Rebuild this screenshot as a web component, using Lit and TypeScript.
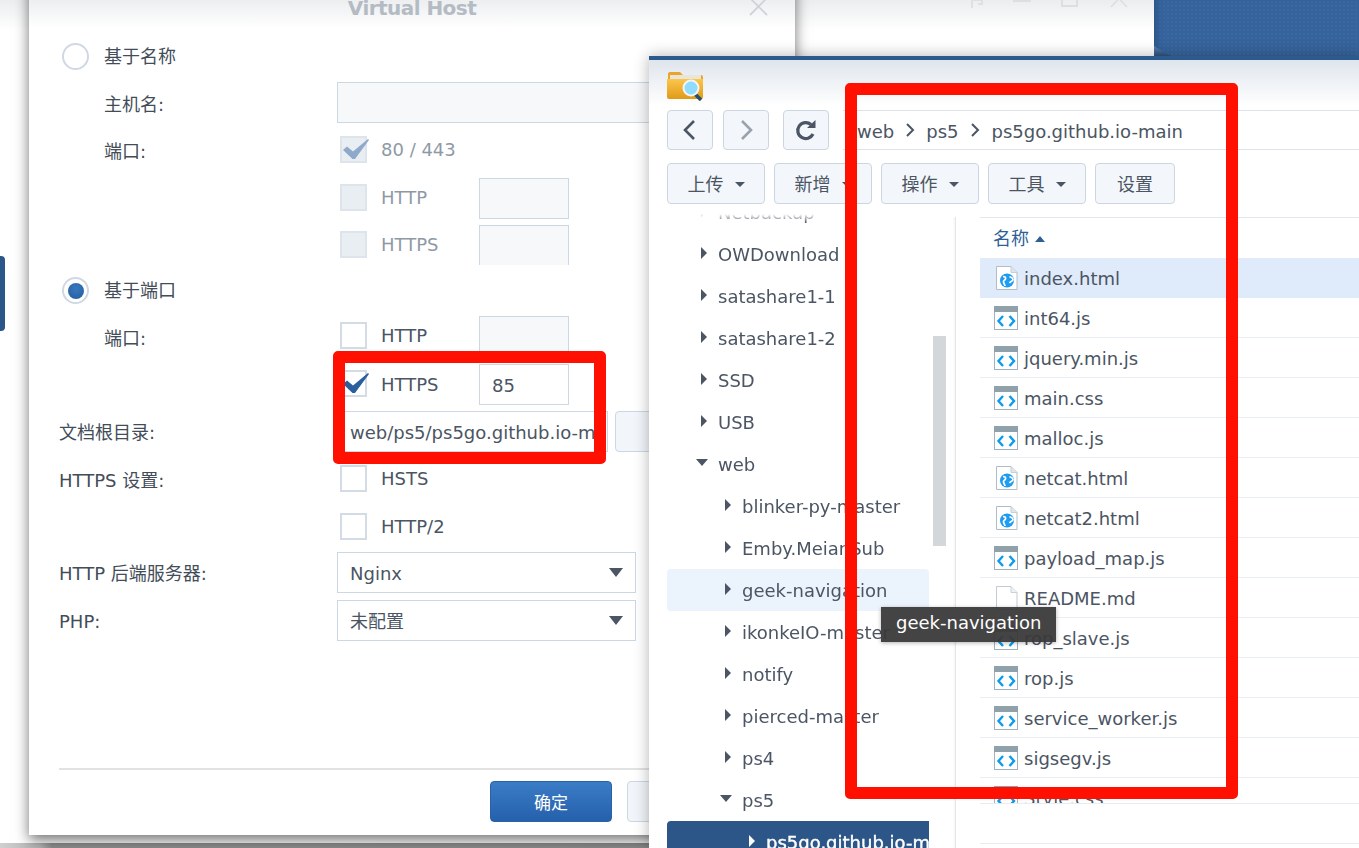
import { LitElement, html, css, svg } from "lit";
import { customElement } from "lit/decorators.js";

const tree: [string, number, string][] = [
  ["Netbackup", 1, "r"],
  ["OWDownload", 1, "r"],
  ["satashare1-1", 1, "r"],
  ["satashare1-2", 1, "r"],
  ["SSD", 1, "r"],
  ["USB", 1, "r"],
  ["web", 1, "d"],
  ["blinker-py-master", 2, "r"],
  ["Emby.MeianSub", 2, "r"],
  ["geek-navigation", 2, "r hover"],
  ["ikonkeIO-master", 2, "r"],
  ["notify", 2, "r"],
  ["pierced-master", 2, "r"],
  ["ps4", 2, "r"],
  ["ps5", 2, "d"],
  ["ps5go.github.io-main", 3, "r sel"],
];

const files: [string, string][] = [
  ["index.html", "html"],
  ["int64.js", "code"],
  ["jquery.min.js", "code"],
  ["main.css", "code"],
  ["malloc.js", "code"],
  ["netcat.html", "html"],
  ["netcat2.html", "html"],
  ["payload_map.js", "code"],
  ["README.md", "doc"],
  ["rop_slave.js", "code"],
  ["rop.js", "code"],
  ["service_worker.js", "code"],
  ["sigsegv.js", "code"],
  ["Style.css", "code"],
];

const codeIcon = svg`<svg class="ficon" viewBox="0 0 24 24"><rect x=".5" y=".5" width="23" height="23" fill="#fff" stroke="#9fb2bd"/><rect width="24" height="6" fill="#8fa2ac"/><path d="M9 10 4.500 15 9 20M15.500 10 20 15l-4.500 5" fill="none" stroke="#0a9bec" stroke-width="2.400"/></svg>`;
const htmlIcon = svg`<svg class="ficon" viewBox="0 0 24 24"><path d="M2.500.5H17L23 6.500V23.500H2.500Z" fill="#fff" stroke="#aebdc8"/><path d="M17 .5V6.500H23" fill="#dfe6ea" stroke="#c4cfd6"/><circle cx="13" cy="14.500" r="7" fill="#1d9cf0"/><path d="M9 10.500c2 0 3 1 2.500 2.500S9 14 9.500 16s1.500 3 1.500 4M15.500 10.500c1 1 3.500 1 3.500 3s-2.500 1.500-3.500 3.500" fill="none" stroke="#fff" stroke-width="1.700"/></svg>`;
const docIcon = svg`<svg class="ficon" viewBox="0 0 24 24"><path d="M2.500.5H17L23 6.500V23.500H2.500Z" fill="#fff" stroke="#c0cbd3"/><path d="M17 .5V6.500H23" fill="#eef1f3" stroke="#c8d2d9"/></svg>`;
const icons: Record<string, unknown> = { code: codeIcon, html: htmlIcon, doc: docIcon };

const check = svg`<svg class="tick" viewBox="0 0 26 20"><path d="M0 11 4 7.500 10 12.500 25 0 26 1 12 20H9.500Z" fill="currentColor"/></svg>`;

@customElement("app-root")
export class AppRoot extends LitElement {
  static styles = css`
    :host { display: block; width: 1359px; height: 848px; }
    * { box-sizing: border-box; }
    .stage {
      position: relative; width: 1359px; height: 848px; overflow: hidden; background: #fff;
      font: 18px/24px "DejaVu Sans", "Noto Sans CJK SC", sans-serif; color: #4b5563;
    }
    .topfade { position: absolute; left: 0; top: 0; width: 1154px; height: 30px; background: linear-gradient(#ebedef, #fff); }
    .desktop {
      position: absolute; left: 1154px; top: 0; right: 0; height: 60px; background-color: #36639b;
      background-image: radial-gradient(circle, #3b68a0 1px, transparent 1.200px);
      background-size: 4px 4px; box-shadow: inset 8px 0 6px -6px #2a5283;
    }
    .fold { position: absolute; left: 0; top: 46px; width: 17px; height: 10px; background: linear-gradient(#5b80ad, #2c5483); clip-path: polygon(0 0, 100% 100%, 0 100%); }
    .tab { position: absolute; left: 0; top: 256px; width: 5px; height: 75px; background: #2b5687; border-radius: 0 4px 4px 0; }
    .strip { position: absolute; left: 0; right: 0; bottom: 0; height: 5px; background: linear-gradient(90deg, #d0d0d0 0, #b5b5b5 40px, #8f8f8f 52px, #8a8a8a 100%); }
    .ctrl { position: absolute; top: -10px; left: 970px; display: flex; }
    .ctrl svg { display: block; width: 18px; height: 18px; flex: none; }
    .ctrl svg:nth-child(2) { margin-left: 25px; }
    .ctrl svg:nth-child(3) { margin-left: 30px; }
    .ctrl svg:nth-child(4) { margin-left: 31px; }

    .dialog {
      position: absolute; left: 29px; top: -20px; width: 766px; height: 855px; background: #fff;
      display: flex; flex-direction: column; box-shadow: 0 5px 13px rgba(0,0,0,.55);
    }
    .dhead {
      position: relative; height: 48px; flex: none; background: linear-gradient(#dfe2e6, #fff);
      display: flex; align-items: flex-start; justify-content: center;
    }
    .title { font-size: 20px; line-height: 24px; margin-top: 16px; font-weight: 700; color: #b4bbc3; letter-spacing: -.55px; }
    .dclose { position: absolute; right: 27px; top: 17px; width: 19px; height: 19px; }
    .form { flex: 1; padding: 8px 0 0 30px; display: flex; flex-direction: column; min-height: 0; }
    .row { display: flex; align-items: center; height: 41px; flex: none; margin-top: 6px; }
    .g5 { margin-top: 5px; } .g7 { margin-top: 7px; } .g8 { margin-top: 8px; }
    .first { margin-top: 0; }
    .first span { padding-top: 3px; }
    .clip { height: 40px; overflow: hidden; align-items: flex-start; }
    .clip .lab, .clip .ctl { height: 41px; }
    .lab { width: 278px; flex: none; padding-top: 3px; color: #434d58; }
    .lab.in, .lab.low { padding-top: 5px; }
    .lab.in { padding-left: 45px; }
    .radio-row { gap: 15px; color: #434d58; }
    .radio { width: 27px; height: 27px; border-radius: 50%; border: 2px solid #cfd8e3; background: #fff; flex: none; margin-left: 3px; display: flex; align-items: center; justify-content: center; }
    .radio i { display: block; width: 16px; height: 16px; border-radius: 50%; background: radial-gradient(circle at 50% 35%, #3a79bf, #235a9e); }
    .radio-row span { padding-top: 1px; }
    .ctl { display: flex; align-items: center; flex: none; height: 100%; }
    .cb { position: relative; width: 27px; height: 27px; margin-left: 3px; flex: none; border: 2px solid #d3dbe4; background: #fff; color: #2a5f9e; }
    .cb.off { background: #e9eef3; border-color: #dde4ec; color: #8fa9cb; }
    .up .cb, .up .cl { margin-top: -2px; }
    .upb .cb { margin-top: -2px; }
    .tick { position: absolute; left: 1px; top: 1px; width: 26px; height: 20px; }
    .cl { margin-left: 14px; width: 98px; }
    .cl.off { color: #8f99a6; }
    .inp { height: 41px; border: 1.500px solid #ccd7e4; background: #fff; font: inherit; padding: 2px 12px 0; white-space: nowrap; overflow: hidden; flex: none; display: flex; align-items: center; }
    .inp.off { background: #f6f8fa; }
    .small { width: 90px; }
    .up .small { margin-top: 0; }
    .wide { width: 330px; }
    .root { width: 271px; }
    .browse { margin-left: 7px; width: 140px; height: 41px; flex: none; border: 1.500px solid #ccd7e4; border-radius: 4px; background: #f2f6fa; }
    .sel { position: relative; width: 299px; padding-top: 3px; }
    .sel::after { content: ""; position: absolute; right: 12px; top: 15px; border: 7.500px solid transparent; border-top: 9px solid #4b5563; border-bottom: 0; }
    .dfoot { height: 67px; flex: none; margin-left: 30px; border-top: 2px solid #e2e2e2; padding: 11px 46px 0 0; display: flex; justify-content: flex-end; gap: 15px; }
    .btn { width: 122px; height: 41px; border-radius: 4px; display: flex; align-items: center; justify-content: center; font-size: 17px; flex: none; padding-top: 2px; }
    .ok { background: linear-gradient(#3b7cc7, #2560ab); border: 1px solid #2a62a8; color: #fff; }
    .no { background: #f1f5f9; border: 1.500px solid #ccd7e4; }

    .fwin {
      position: absolute; left: 649px; top: 56px; width: 710px; height: 792px;
      border-top: 4px solid #2c5a8c; background: linear-gradient(#dfe5ed 0, #fff 46px);
      box-shadow: 0 0 14px rgba(0,0,0,.3); display: flex; flex-direction: column; padding-left: 18px;
    }
    .fhead { height: 50px; flex: none; padding-top: 10px; }
    .fhead svg { display: block; width: 37px; height: 31px; }
    .nav { display: flex; height: 40px; flex: none; gap: 10px; }
    .tbtn { border: 1.500px solid #ccd6e2; border-radius: 4px; background: #f3f7fb; display: flex; align-items: center; justify-content: center; flex: none; }
    .nb { width: 46px; height: 40px; }
    .nb svg { width: 24px; height: 24px; }
    .refresh { margin-left: 4px; }
    .crumb { flex: 1; margin-left: 4px; border: solid #dde3ea; border-width: 1.500px 0; background: #fff; display: flex; align-items: center; padding: 4px 0 0 14px; }
    .crumb svg { width: 10px; height: 14px; margin: -4px 11px 0; flex: none; }
    .crumb .last { margin-left: 1px; }
    .tools { display: flex; gap: 9px; height: 41px; margin-top: 13px; flex: none; }
    .tb { width: 98px; height: 41px; gap: 11px; padding-top: 2px; }
    .tb i { display: block; border: 5px solid transparent; border-top: 5px solid #4b5563; border-bottom: 0; }
    .set { width: 80px; }
    .main { flex: 1; display: flex; min-height: 0; margin-top: 10px; }
    .tree { width: 262px; flex: none; overflow: hidden; -webkit-mask-image: linear-gradient(transparent 0, #000 9px); mask-image: linear-gradient(transparent 0, #000 9px); }
    .tlist { margin-top: -23px; }
    .node { height: 42px; display: flex; align-items: center; white-space: nowrap; border-radius: 4px; overflow: hidden; padding-top: 2px; }
    .node.hover { background: #ebf3fc; }
    .node.sel { background: #2b5687; color: #fff; -webkit-text-stroke: .4px #fff; border-radius: 4px 0 0 0; }
    .l1 { padding-left: 34px; } .l2 { padding-left: 58px; } .l3 { padding-left: 82px; }
    .arr { width: 17px; flex: none; display: flex; justify-content: flex-start; }
    .arr.r i { margin-top: -5px; display: block; border: 6.500px solid transparent; border-left: 6px solid #4b5563; border-right: 0; }
    .arr.d { margin-left: -5px; width: 22px; }
    .arr.d i { display: block; margin-top: -5px; border: 6px solid transparent; border-top: 7px solid #4b5563; border-bottom: 0; }
    .sel .arr.r i { border-left-color: #fff; }
    .track { width: 13px; flex: none; margin-left: 4px; }
    .thumb { margin-top: 122px; height: 210px; background: #d4d7da; }
    .vline { width: 1px; flex: none; margin: 3px 0 0 9px; background: #e4e6e8; box-shadow: -1px 0 2px rgba(0,0,0,.06); }
    .list { flex: 1; margin: 3px 0 0 24px; border-top: 1.500px solid #e1e7ee; display: flex; flex-direction: column; min-width: 0; }
    .lhead { height: 40px; flex: none; display: flex; align-items: center; padding: 2px 0 0 13px; gap: 6px; color: #2f5f97; }
    .lhead i { display: block; border: 5px solid transparent; border-bottom: 6px solid #2f5f97; border-top: 0; }
    .rows { height: 546px; flex: none; overflow: hidden; border-bottom: 1.500px solid #e6ecf2; }
    .frow { height: 40px; display: flex; align-items: center; padding-left: 14px; gap: 6px; border-bottom: 1.500px solid #e9eef4; }
    .frow span { padding-top: 2px; }
    .frow.on { background: #dfeafa; border-bottom-color: #dfeafa; }
    .ficon { width: 24px; height: 24px; flex: none; display: block; }
    .lfoot { height: 40px; flex: none; border-bottom: 1.500px solid #e6ecf2; }

    .tip {
      position: absolute; left: 232px; top: 547px; height: 35px; width: 175px; background: rgba(56,56,56,.94);
      color: #fff; display: flex; align-items: center; padding: 0 0 3px 15px; box-shadow: 0 1px 4px rgba(0,0,0,.3); white-space: nowrap;
    }
    .mark { position: absolute; border: 12px solid #ff1000; border-radius: 5px; }
    .m1 { left: 333px; top: 351px; width: 273px; height: 113px; }
    .m2 { left: 845px; top: 83px; width: 393px; height: 716px; }
  `;

  private cb(on: boolean, off: boolean, label: string) {
    return html`<div class="cb ${off ? "off" : ""}">${on ? check : ""}</div><div class="cl ${off ? "off" : ""}">${label}</div>`;
  }

  render() {
    return html`<div class="stage">
      <div class="topfade"></div>
      <div class="desktop"><div class="fold"></div></div>
      <div class="tab"></div>
      <div class="strip"></div>
      <div class="ctrl">
        <svg viewBox="0 0 18 18"><path d="M2 18V10H12V14H8" fill="none" stroke="#e0e0e0" stroke-width="2"/></svg>
        <svg viewBox="0 0 18 18"><path d="M0 11H18" stroke="#dedede" stroke-width="2"/></svg>
        <svg viewBox="0 0 18 18"><rect x="1" y="1" width="15" height="15" fill="none" stroke="#dedede" stroke-width="2"/></svg>
        <svg viewBox="0 0 18 18"><path d="M1 0 17 17M17 0 1 17" stroke="#dedede" stroke-width="1.600"/></svg>
      </div>

      <div class="dialog">
        <div class="dhead">
          <div class="title">Virtual Host</div>
          <svg class="dclose" viewBox="0 0 19 19"><path d="M1 1 18 18M18 1 1 18" stroke="#cfd3d8" stroke-width="1.800"/></svg>
        </div>
        <div class="form">
          <div class="row first radio-row"><div class="radio"></div><span>基于名称</span></div>
          <div class="row g5"><div class="lab in">主机名:</div><div class="inp off wide"></div></div>
          <div class="row"><div class="lab in">端口:</div><div class="ctl">${this.cb(true, true, "80 / 443")}</div></div>
          <div class="row g8 up"><div class="lab"></div><div class="ctl">${this.cb(false, true, "HTTP")}<div class="inp off small"></div></div></div>
          <div class="row clip up"><div class="lab"></div><div class="ctl">${this.cb(false, true, "HTTPS")}<div class="inp off small"></div></div></div>
          <div class="row g5 radio-row"><div class="radio"><i></i></div><span>基于端口</span></div>
          <div class="row g5 up"><div class="lab in">端口:</div><div class="ctl">${this.cb(false, false, "HTTP")}<div class="inp off small"></div></div></div>
          <div class="row g7 upb"><div class="lab"></div><div class="ctl">${this.cb(true, false, "HTTPS")}<div class="inp small">85</div></div></div>
          <div class="row"><div class="lab">文档根目录:</div><div class="inp root">web/ps5/ps5go.github.io-main</div><div class="browse"></div></div>
          <div class="row"><div class="lab low">HTTPS 设置:</div><div class="ctl">${this.cb(false, false, "HSTS")}</div></div>
          <div class="row g7"><div class="lab"></div><div class="ctl">${this.cb(false, false, "HTTP/2")}</div></div>
          <div class="row g5"><div class="lab">HTTP 后端服务器:</div><div class="inp sel">Nginx</div></div>
          <div class="row g7"><div class="lab">PHP:</div><div class="inp sel">未配置</div></div>
        </div>
        <div class="dfoot"><div class="btn ok">确定</div><div class="btn no">取消</div></div>
      </div>

      <div class="fwin">
        <div class="fhead">
          <svg viewBox="0 0 37 31">
            <defs><linearGradient id="fg" x1="0" y1="0" x2="0" y2="1"><stop offset="0" stop-color="#fbc64a"/><stop offset="1" stop-color="#e09a1a"/></linearGradient></defs>
            <path d="M1 4a2 2 0 0 1 2-2h10l3 3h18a2 2 0 0 1 2 2v20H1Z" fill="#e8a52a"/>
            <rect x="3" y="5" width="31" height="4" fill="#e9e5da"/>
            <path d="M0 9h36v18a2 2 0 0 1-2 2H2a2 2 0 0 1-2-2Z" fill="url(#fg)"/>
            <path d="M28 24l6 6" stroke="#23506f" stroke-width="3.500"/>
            <circle cx="24" cy="18" r="7.500" fill="#8fdcff" stroke="#f4f4f0" stroke-width="2"/>
          </svg>
        </div>
        <div class="nav">
          <div class="tbtn nb"><svg viewBox="0 0 24 24"><path d="M16 3 7 12l9 9" fill="none" stroke="#4b5563" stroke-width="2.600"/></svg></div>
          <div class="tbtn nb"><svg viewBox="0 0 24 24"><path d="M8 3l9 9-9 9" fill="none" stroke="#9aa3ad" stroke-width="2.600"/></svg></div>
          <div class="tbtn nb refresh"><svg viewBox="0 0 24 24"><path d="M19 16A8 8 0 1 1 17 6.500" fill="none" stroke="#4b5563" stroke-width="3.200"/><path d="M13 10H21.500V2Z" fill="#4b5563"/></svg></div>
          <div class="crumb"><span>web</span>
            <svg viewBox="0 0 10 14"><path d="M2 1l6 6-6 6" fill="none" stroke="#4b5563" stroke-width="2"/></svg><span>ps5</span>
            <svg viewBox="0 0 10 14"><path d="M2 1l6 6-6 6" fill="none" stroke="#4b5563" stroke-width="2"/></svg><span class="last">ps5go.github.io-main</span></div>
        </div>
        <div class="tools">
          ${["上传", "新增", "操作", "工具"].map((t) => html`<div class="tbtn tb">${t}<i></i></div>`)}
          <div class="tbtn tb set">设置</div>
        </div>
        <div class="main">
          <div class="tree"><div class="tlist">
            ${tree.map(([n, l, c]) => {
              const p = c.split(" ");
              return html`<div class="node l${l} ${p[1] ?? ""}"><div class="arr ${p[0]}"><i></i></div>${n}</div>`;
            })}
          </div></div>
          <div class="track"><div class="thumb"></div></div>
          <div class="vline"></div>
          <div class="list">
            <div class="lhead">名称<i></i></div>
            <div class="rows">
              ${files.map(([n, t], i) => html`<div class="frow ${i === 0 ? "on" : ""}">${icons[t]}<span>${n}</span></div>`)}
            </div>
            <div class="lfoot"></div>
          </div>
        </div>
        <div class="tip">geek-navigation</div>
      </div>

      <div class="mark m1"></div>
      <div class="mark m2"></div>
    </div>`;
  }
}
